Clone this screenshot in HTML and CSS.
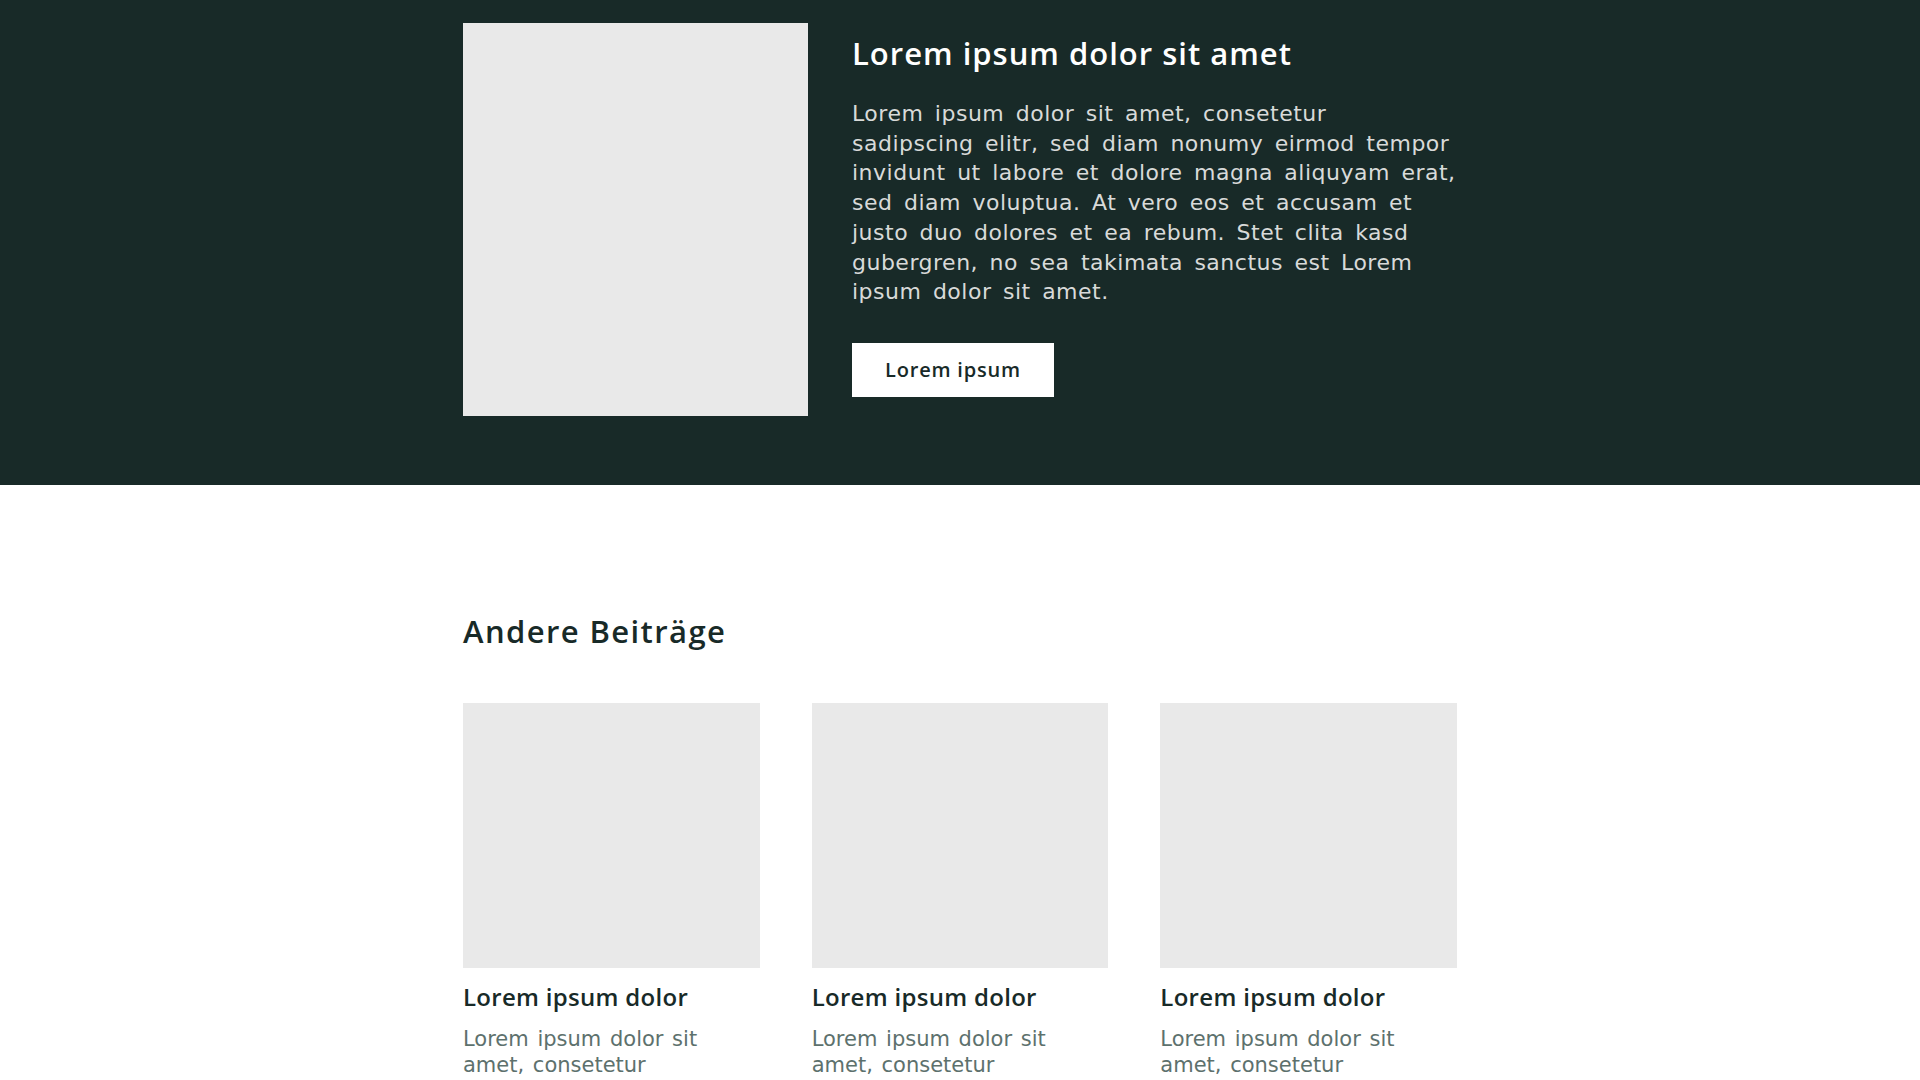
FILE: index.html
```html
<!DOCTYPE html>
<html lang="de">
<head>
<meta charset="utf-8">
<title>Beitrag</title>
<link rel="stylesheet" href="styles.css">
</head>
<body>
<section class="hero">
  <div class="container hero-inner">
    <div class="hero-image"></div>
    <div class="hero-text">
      <h1 class="hero-title">Lorem ipsum dolor sit amet</h1>
      <p class="hero-copy">Lorem ipsum dolor sit amet, consetetur sadipscing elitr, sed diam nonumy eirmod tempor invidunt ut labore et dolore magna aliquyam erat, sed diam voluptua. At vero eos et accusam et justo duo dolores et ea rebum. Stet clita kasd gubergren, no sea takimata sanctus est Lorem ipsum dolor sit amet.</p>
      <a class="hero-button" href="#">Lorem ipsum</a>
    </div>
  </div>
</section>
<section class="more">
  <div class="container">
    <h2 class="more-title">Andere Beiträge</h2>
    <div class="cards">
      <article class="card">
        <div class="card-image"></div>
        <h3 class="card-title">Lorem ipsum dolor</h3>
        <p class="card-copy">Lorem ipsum dolor sit amet, consetetur</p>
      </article>
      <article class="card">
        <div class="card-image"></div>
        <h3 class="card-title">Lorem ipsum dolor</h3>
        <p class="card-copy">Lorem ipsum dolor sit amet, consetetur</p>
      </article>
      <article class="card">
        <div class="card-image"></div>
        <h3 class="card-title">Lorem ipsum dolor</h3>
        <p class="card-copy">Lorem ipsum dolor sit amet, consetetur</p>
      </article>
    </div>
  </div>
</section>
</body>
</html>
```
FILE: styles.css
```css
* { box-sizing: border-box; }
html, body { margin: 0; padding: 0; }
body {
  font-family: "DejaVu Sans", "Open Sans", sans-serif;
  background: #ffffff;
  color: #182a28;
}
.container {
  width: 994px;
  margin: 0 auto;
}
.hero {
  background: #182a28;
  padding: 23px 0 69px;
}
.hero-inner {
  display: flex;
  gap: 44px;
  align-items: flex-start;
}
.hero-image {
  flex: 0 0 345px;
  height: 393px;
  background: #e9e9e9;
}
.hero-text {
  flex: 1;
  padding-top: 10px;
}
.hero-title {
  margin: 0;
  font-family: "Open Sans", sans-serif;
  font-size: 31px;
  letter-spacing: 1px;
  line-height: 40px;
  font-weight: 600;
  color: #ffffff;
}
.hero-copy {
  margin: 26px 0 0;
  font-size: 22px;
  letter-spacing: 0.5px;
  word-spacing: 4px;
  line-height: 29.7px;
  font-weight: 400;
  color: #d8dad9;
}
.hero-button {
  display: inline-flex;
  align-items: center;
  justify-content: center;
  margin-top: 36px;
  width: 202px;
  height: 54px;
  background: #ffffff;
  color: #182a28;
  font-family: "Open Sans", sans-serif;
  font-size: 20px;
  letter-spacing: 0.8px;
  font-weight: 600;
  text-decoration: none;
}
.more {
  padding: 126px 0 40px;
}
.more-title {
  margin: 0;
  font-family: "Open Sans", sans-serif;
  font-size: 31px;
  letter-spacing: 1.4px;
  line-height: 40px;
  font-weight: 600;
  color: #182a28;
}
.cards {
  margin-top: 52px;
  display: grid;
  grid-template-columns: repeat(3, 1fr);
  gap: 52px;
}
.card-image {
  height: 265px;
  background: #e9e9e9;
}
.card-title {
  margin: 14px 0 0;
  font-family: "Open Sans", sans-serif;
  font-size: 24px;
  letter-spacing: 0.3px;
  line-height: 30px;
  font-weight: 600;
  color: #182a28;
}
.card-copy {
  margin: 14px 0 0;
  font-size: 21px;
  letter-spacing: 0;
  word-spacing: 2px;
  line-height: 26px;
  font-weight: 400;
  color: #5d716d;
}
```
